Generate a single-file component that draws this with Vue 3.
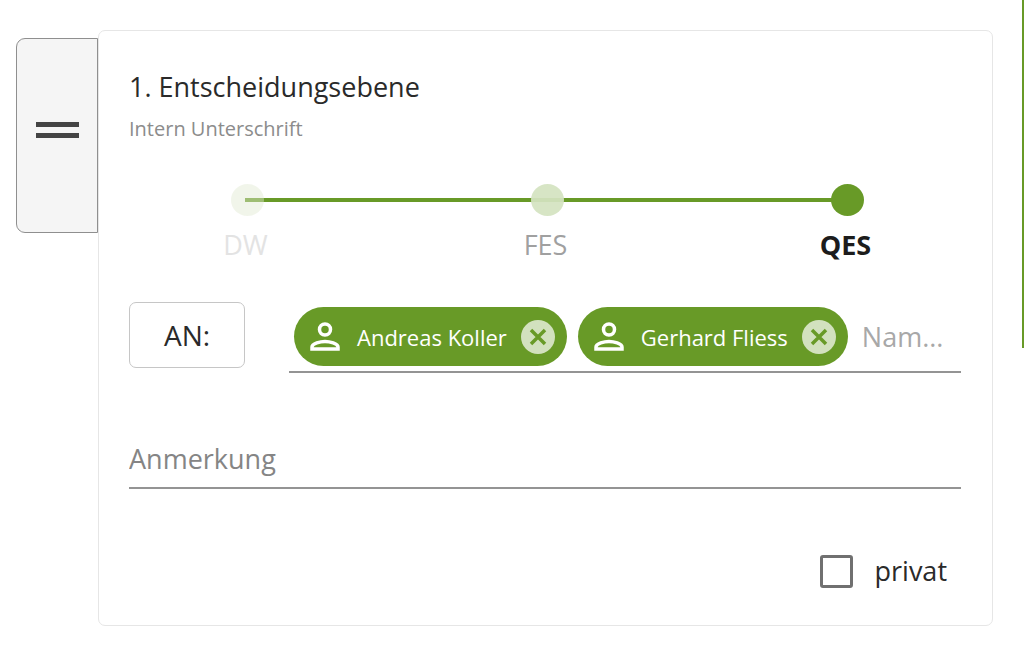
<script setup>
import { ref } from 'vue'

const levels = [
  { id: 'dw', label: 'DW' },
  { id: 'fes', label: 'FES' },
  { id: 'qes', label: 'QES' }
]
const level = ref('qes')
const people = ref(['Andreas Koller', 'Gerhard Fliess'])
const name = ref('')
const note = ref('')
const isPrivate = ref(false)

function removePerson(person) {
  people.value = people.value.filter((p) => p !== person)
}
</script>

<template>
  <main class="page">
    <button class="handle" type="button" aria-label="Verschieben">
      <span class="grip"></span>
    </button>

    <section class="card">
      <h1 class="title">1. Entscheidungsebene</h1>
      <p class="subtitle">Intern Unterschrift</p>

      <div class="levels" role="radiogroup" aria-label="Signaturstufe">
        <label v-for="l in levels" :key="l.id" class="level" :class="l.id">
          <input v-model="level" type="radio" name="level" :value="l.id" />
          <span>{{ l.label }}</span>
        </label>
      </div>

      <div class="recipients">
        <button class="to" type="button">AN:</button>
        <div class="field">
          <div v-for="p in people" :key="p" class="chip">
            <svg class="person" viewBox="0 0 30 30" aria-hidden="true">
              <circle cx="15" cy="7.500" r="5.500" />
              <path d="M2 27v-2c0-3.600 8.500-5.600 13-5.600s13 2 13 5.600v2z" />
            </svg>
            <span class="person-name">{{ p }}</span>
            <button class="remove" type="button" :aria-label="p + ' entfernen'" @click="removePerson(p)">
              <svg viewBox="0 0 34 34" aria-hidden="true">
                <path d="M10 10l14 14M24 10L10 24" />
              </svg>
            </button>
          </div>
          <input v-model="name" class="name" type="text" placeholder="Nam..." aria-label="Name" />
        </div>
      </div>

      <input v-model="note" class="note" type="text" placeholder="Anmerkung" aria-label="Anmerkung" />

      <label class="private">
        <input v-model="isPrivate" type="checkbox" />
        <span>privat</span>
      </label>
    </section>

    <div class="edge"></div>
  </main>
</template>

<style>
body {
  margin: 0;
  background: #fff;
}
</style>

<style scoped>
.page {
  display: flex;
  align-items: flex-start;
  padding: 30px 0 32px 16px;
  position: relative;
  font-family: "Open Sans", "Noto Sans", sans-serif;
  color: #2a2a2a;
}

.page *,
.page *::before {
  box-sizing: border-box;
}

button,
input {
  font: inherit;
  color: inherit;
  margin: 0;
}

.handle {
  display: flex;
  align-items: center;
  justify-content: center;
  flex: none;
  width: 82px;
  height: 195px;
  margin-top: 8px;
  padding: 0 0 12px;
  background: #f5f5f5;
  border: 1px solid #8f8f8f;
  border-radius: 9px 0 0 9px;
  cursor: grab;
}

.grip {
  width: 43px;
  height: 16px;
  border: solid #444;
  border-width: 5px 0;
}

.card {
  flex: 1;
  min-width: 0;
  margin-right: 31px;
  padding: 36px 31px 32px 30px;
  border: 1px solid #e6e6e6;
  border-radius: 7px;
  background: #fff;
}

.title {
  margin: 0;
  font-size: 27px;
  line-height: 40px;
  font-weight: 400;
}

.subtitle {
  margin: 8px 0 0;
  font-size: 20px;
  line-height: 28px;
  color: #8c8c8c;
}

.levels {
  display: flex;
  justify-content: space-between;
  position: relative;
  margin: 41px 82px 0 86px;
}

.levels::before {
  content: "";
  position: absolute;
  top: 14px;
  left: 30px;
  right: 32px;
  height: 4px;
  background: #689a27;
}

.level {
  display: flex;
  flex-direction: column;
  align-items: center;
  gap: 11px;
  width: 64px;
  position: relative;
  font-size: 27px;
  line-height: 36px;
}

.level input {
  appearance: none;
  width: 33px;
  height: 32px;
  border-radius: 50%;
  background: #689a27;
}

.level span {
  margin-right: 3px;
}

.dw {
  color: #e3e3e3;
}

.dw input {
  background: rgba(223, 232, 209, 0.45);
}

.fes {
  color: #a0a0a0;
}

.fes input {
  background: rgba(212, 227, 193, 0.93);
}

.qes {
  color: #1c1c1c;
  font-weight: 700;
}

.recipients {
  display: flex;
  align-items: flex-start;
  gap: 44px;
  margin-top: 39px;
}

.to {
  flex: none;
  width: 116px;
  height: 66px;
  padding: 0;
  border: 1px solid #c6c6c6;
  border-radius: 7px;
  background: #fff;
  font-size: 28px;
}

.field {
  display: flex;
  align-items: center;
  gap: 11px;
  flex: 1;
  min-width: 0;
  padding: 5px 0 5px 5px;
  border-bottom: 2px solid #949494;
}

.chip {
  display: flex;
  align-items: center;
  flex: none;
  height: 59px;
  padding: 0 12px 0 16px;
  border-radius: 30px;
  background: #689a27;
  color: #fff;
  font-size: 22px;
}

.person {
  width: 30px;
  height: 30px;
  margin-right: 17px;
  fill: none;
  stroke: #fff;
  stroke-width: 3.500;
}

.remove {
  display: flex;
  width: 34px;
  height: 34px;
  margin-left: 14px;
  padding: 0;
  border: 0;
  border-radius: 50%;
  background: #d2e1be;
}

.remove svg {
  width: 34px;
  height: 34px;
  fill: none;
  stroke: #689a27;
  stroke-width: 3.500;
}

.name {
  flex: 1;
  min-width: 0;
  padding: 0 0 0 3px;
  border: 0;
  outline: 0;
  background: none;
  font-size: 27px;
}

.name::placeholder {
  color: #a8a8a8;
  opacity: 1;
}

.note {
  display: block;
  width: 100%;
  height: 60px;
  margin-top: 56px;
  padding: 0;
  border: 0;
  border-bottom: 2px solid #949494;
  outline: 0;
  background: none;
  font-size: 27px;
}

.note::placeholder {
  color: #858585;
  opacity: 1;
}

.private {
  display: flex;
  align-items: center;
  justify-content: flex-end;
  gap: 22px;
  margin: 60px 14px 0 0;
  font-size: 27px;
  line-height: 44px;
}

.private input {
  appearance: none;
  width: 33px;
  height: 33px;
  border: 3px solid #707070;
  border-radius: 3px;
}

.private input:checked {
  background: #689a27;
}

.edge {
  position: absolute;
  top: 0;
  right: 0;
  width: 2px;
  height: 348px;
  background: #689a27;
}
</style>
